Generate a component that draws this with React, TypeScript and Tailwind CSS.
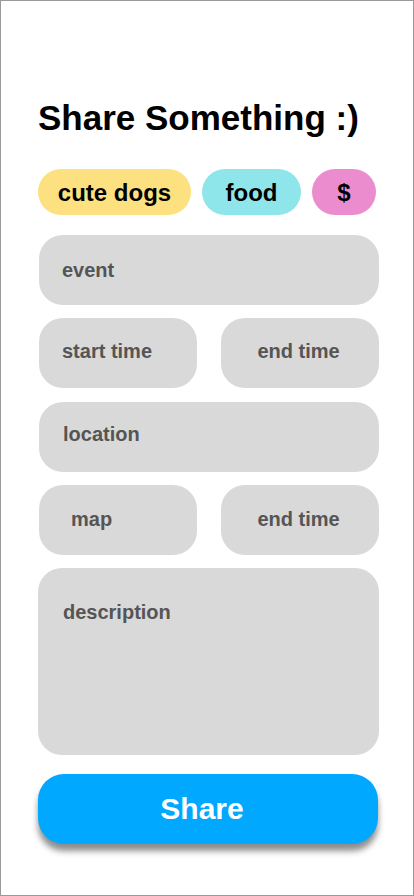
import React from "react";

const font = { fontFamily: '"Liberation Sans", Arial, sans-serif' };

function Field({ label, className = "", textClass = "" }: { label: string; className?: string; textClass?: string }) {
  return (
    <div className={`bg-[#d9d9d9] rounded-[24px] flex ${className}`}>
      <span className={`text-[20px] font-bold text-[#555555] leading-none ${textClass}`}>{label}</span>
    </div>
  );
}

export default function App() {
  return (
    <div style={font} className="w-[414px] h-[896px] border border-[#999999] bg-white box-border overflow-hidden">
      <div className="pl-[37px] pt-[99px] w-[378px]">
        <h1 className="text-[35px] font-bold text-black leading-none tracking-[0px]">Share Something :)</h1>
        <div className="flex gap-[11px] mt-[34px] h-[46px]">
          <div className="w-[153px] h-[46px] rounded-full bg-[#fde07f] flex items-center justify-center text-[24px] font-bold text-black pt-[1px]">cute dogs</div>
          <div className="w-[99px] h-[46px] rounded-full bg-[#8ee6ea] flex items-center justify-center text-[24px] font-bold text-black pt-[1px]">food</div>
          <div className="w-[64px] h-[46px] rounded-full bg-[#ea8ccd] flex items-center justify-center text-[24px] font-bold text-black pt-[1px]">$</div>
        </div>
        <div className="flex flex-col mt-[20px] pl-[1px]">
          <Field label="event" className="h-[70px] items-center pl-[23px]" />
          <div className="flex gap-[24px] mt-[13px]">
            <Field label="start time" className="w-[158px] h-[70px] items-center pl-[23px] pb-[4px]" />
            <Field label="end time" className="w-[158px] h-[70px] items-center justify-center pb-[4px] pr-[3px]" />
          </div>
          <Field label="location" className="h-[70px] items-center pl-[24px] mt-[14px] pb-[6px]" />
          <div className="flex gap-[24px] mt-[13px]">
            <Field label="map" className="w-[158px] h-[70px] items-center pl-[32px] pb-[2px]" />
            <Field label="end time" className="w-[158px] h-[70px] items-center justify-center pb-[2px] pr-[3px]" />
          </div>
          <Field label="description" className="h-[187px] items-start pl-[25px] pt-[34px] mt-[13px] -ml-[1px]" />
        </div>
        <button className="mt-[19px] w-[340px] h-[70px] rounded-[26px] bg-[#00a8ff] text-white text-[30px] font-bold flex items-center justify-center pr-[12px] pb-[2px] shadow-[0_7px_6px_rgba(0,0,0,0.45)]">
          Share
        </button>
      </div>
    </div>
  );
}
